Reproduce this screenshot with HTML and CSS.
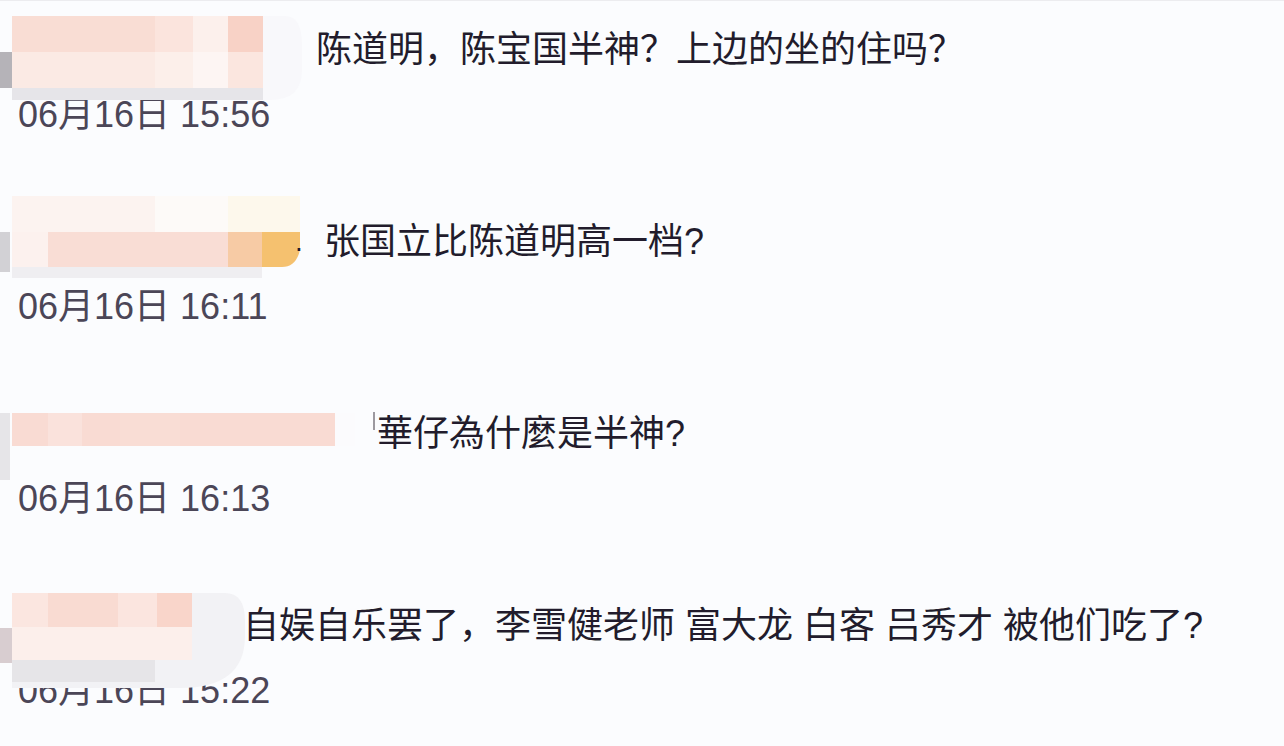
FILE: index.html
```html
<!DOCTYPE html>
<html lang="zh-CN">
<head>
  <meta charset="UTF-8" />
  <meta name="viewport" content="width=device-width, initial-scale=1.0" />
  <title>评论</title>
  <link rel="stylesheet" href="styles.css">
</head>
<body>
  <div class="list">
    <div class="comment">
      <svg class="mosaic" width="340" height="192" viewBox="0 0 340 192">
        <path d="M263 16 H285 Q302 16 302 45 V70 Q302 100 270 100 H263 Z" fill="#f8f8fb" />
        <rect x="0" y="52" width="12" height="36" fill="#b5b3b8" />
        <rect x="12" y="88" width="251" height="12" fill="#e6e5e9" />
        <rect x="12" y="16" width="143" height="36" fill="#f9ddd4" />
        <rect x="155" y="16" width="38" height="36" fill="#fbe4dd" />
        <rect x="193" y="16" width="35" height="36" fill="#fcf0ec" />
        <rect x="228" y="16" width="35" height="36" fill="#f8d2c6" />
        <rect x="12" y="52" width="143" height="36" fill="#fbeae4" />
        <rect x="155" y="52" width="38" height="36" fill="#fcefea" />
        <rect x="193" y="52" width="35" height="36" fill="#fdf5f3" />
        <rect x="228" y="52" width="35" height="36" fill="#fbe6df" />
      </svg>
      <div class="head head-1">
        <p class="text">陈道明，陈宝国半神？上边的坐的住吗？</p>
      </div>
      <div class="time">06月16日 15:56</div>
    </div>

    <div class="comment">
      <svg class="mosaic" width="340" height="192" viewBox="0 0 340 192">
        <rect x="0" y="40" width="10" height="40" fill="#d2d1d5" />
        <rect x="12" y="75" width="250" height="11" fill="#efeef1" />
        <rect x="12" y="4" width="143" height="36" fill="#fcf3f0" />
        <rect x="155" y="4" width="73" height="36" fill="#fdfaf8" />
        <rect x="228" y="4" width="72" height="36" fill="#fdf8ec" />
        <rect x="12" y="40" width="36" height="35" fill="#fcf1ee" />
        <rect x="48" y="40" width="180" height="35" fill="#f9ddd5" />
        <rect x="228" y="40" width="34" height="35" fill="#f7cba5" />
        <path d="M262 40 H300 V58 Q296 75 282 75 H262 Z" fill="#f5c16f" />
      </svg>
      <div class="head head-2">
        <span class="dot">.</span>
        <p class="text">张国立比陈道明高一档?</p>
      </div>
      <div class="time">06月16日 16:11</div>
    </div>

    <div class="comment">
      <svg class="mosaic" width="390" height="192" viewBox="0 0 390 192">
        <rect x="0" y="29" width="10" height="67" fill="#e6e5e8" />
        <rect x="12" y="29" width="323" height="33" fill="#f9dbd3" />
        <rect x="48" y="29" width="34" height="33" fill="#fae2dc" />
        <rect x="120" y="29" width="60" height="33" fill="#f9ddd5" />
        <rect x="335" y="29" width="20" height="33" fill="#fbfbfd" />
        <rect x="373" y="28" width="2" height="18" fill="#9c99a0" />
      </svg>
      <div class="head head-3">
        <p class="text">華仔為什麼是半神?</p>
      </div>
      <div class="time">06月16日 16:13</div>
    </div>

    <div class="comment">
      <svg class="mosaic" width="340" height="192" viewBox="0 0 340 192">
        <path d="M12 17 H225 Q245 17 245 45 V60 Q245 112 180 112 H12 Z" fill="#f2f2f5" />
        <rect x="12" y="84" width="143" height="22" fill="#e6e5e8" />
        <rect x="0" y="52" width="12" height="35" fill="#d8cdd0" />
        <rect x="12" y="17" width="36" height="34" fill="#fbe6e0" />
        <rect x="48" y="17" width="70" height="34" fill="#f9dbd2" />
        <rect x="118" y="17" width="39" height="34" fill="#fbe5df" />
        <rect x="157" y="17" width="35" height="34" fill="#f9d5ca" />
        <rect x="12" y="51" width="180" height="33" fill="#fcefeb" />
      </svg>
      <div class="head head-4">
        <p class="text">自娱自乐罢了，李雪健老师 富大龙 白客 吕秀才 被他们吃了?</p>
      </div>
      <div class="time">06月16日 15:22</div>
    </div>
  </div>
</body>
</html>
```

FILE: styles.css
```css
* {
  box-sizing: border-box;
  margin: 0;
  padding: 0;
}
body {
  background-color: #fbfcfe;
  color: #221c2c;
  font-family: "Liberation Sans", "Noto Sans CJK SC", sans-serif;
  font-size: 36px;
  border-top: 1px solid #ececef;
  height: 746px;
  overflow: hidden;
}
.list {
  display: flex;
  flex-direction: column;
  margin-top: -1px;
}
.comment {
  position: relative;
  height: 192px;
}
.mosaic {
  position: absolute;
  left: 0;
  top: 0;
  z-index: 1;
  pointer-events: none;
}
.head {
  height: 100px;
  display: flex;
  align-items: center;
}
.head-1 { padding-left: 316px; }
.head-2 { padding-left: 295px; }
.head-3 { padding-left: 377px; }
.head-4 { padding-left: 243px; }
.dot {
  position: relative;
  z-index: 2;
  width: 29px;
  font-size: 28px;
}
.text {
  line-height: 40px;
  white-space: nowrap;
}
.time {
  height: 30px;
  line-height: 30px;
  padding-left: 18px;
  color: #4b4657;
}
```
